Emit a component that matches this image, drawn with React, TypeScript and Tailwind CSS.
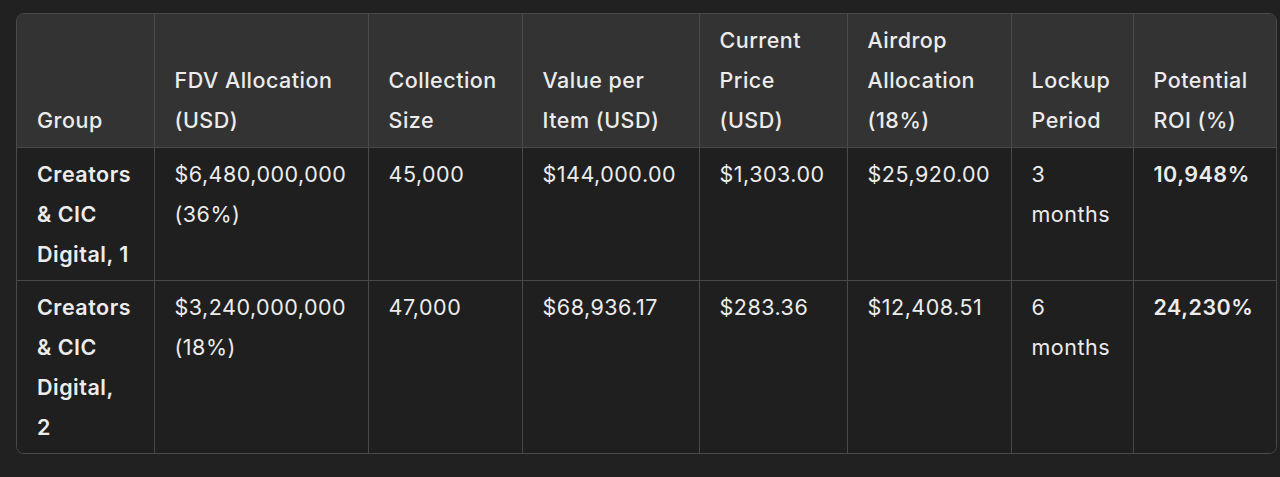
const headers = [
  'Group',
  'FDV Allocation (USD)',
  'Collection Size',
  'Value per Item (USD)',
  'Current Price (USD)',
  'Airdrop Allocation (18%)',
  'Lockup Period',
  'Potential ROI (%)',
]

const widths = ['w-[137px]', 'w-[214px]', 'w-[154px]', 'w-[177px]', 'w-[148px]', 'w-[164px]', 'w-[122px]', 'w-[145px]']

const rows = [
  ['Creators & CIC Digital, 1', '$6,480,000,000 (36%)', '45,000', '$144,000.00', '$1,303.00', '$25,920.00', '3 months', '10,948%'],
  ['Creators & CIC Digital, 2', '$3,240,000,000 (18%)', '47,000', '$68,936.17', '$283.36', '$12,408.51', '6 months', '24,230%'],
]

export default function App() {
  return (
    <div className="min-h-[477px] bg-[#212121] pt-[13px] pl-[16px] font-['Inter',sans-serif] text-[21.5px] leading-[40px] tracking-[0.5px] text-[#ececec]">
      <div className="w-[1261px] overflow-hidden rounded-lg border border-[#4a4a4a]">
        <table className="w-full table-fixed border-collapse">
          <colgroup>
            {widths.map((w, i) => (
              <col key={i} className={w} />
            ))}
          </colgroup>
          <thead>
            <tr className="bg-[#333333]">
              {headers.map((h, i) => (
                <th
                  key={i}
                  className="border-l border-[#4a4a4a] pl-[20px] pr-[21px] pt-[6px] pb-[7px] text-left align-bottom font-medium first:border-l-0"
                >
                  {h}
                </th>
              ))}
            </tr>
          </thead>
          <tbody>
            {rows.map((r, ri) => (
              <tr key={ri} className="border-t border-[#4a4a4a] bg-[#1f1f1f]">
                {r.map((c, ci) => (
                  <td
                    key={ci}
                    className={
                      'border-l border-[#4a4a4a] pl-[20px] pr-[21px] pt-[6px] pb-[6px] align-top first:border-l-0 ' +
                      (ci === 0 || ci === 7 ? 'font-semibold' : 'font-normal')
                    }
                  >
                    {c}
                  </td>
                ))}
              </tr>
            ))}
          </tbody>
        </table>
      </div>
    </div>
  )
}
